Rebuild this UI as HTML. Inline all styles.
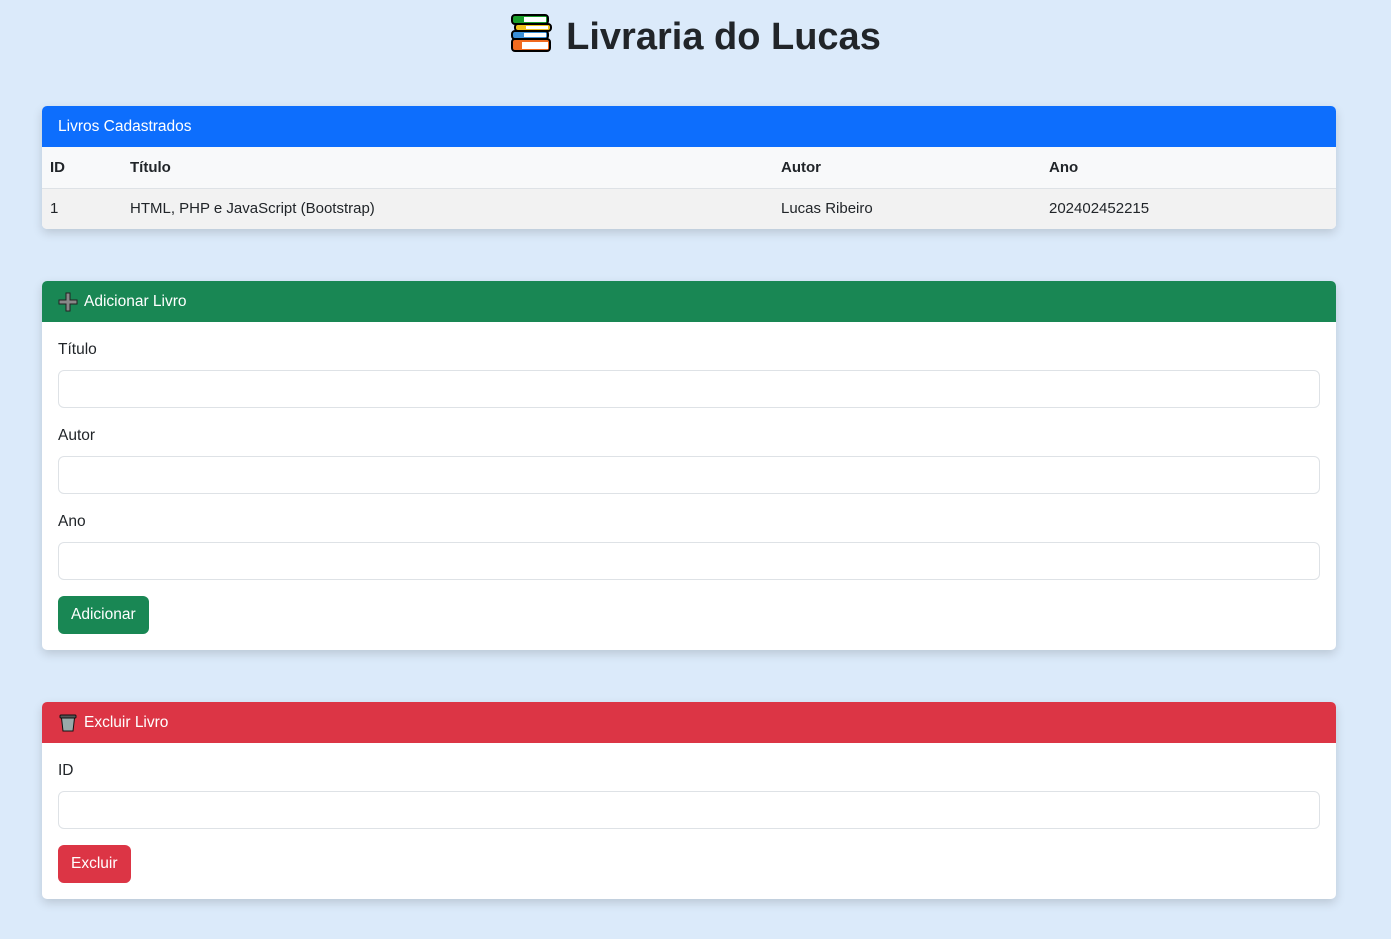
<!DOCTYPE html>
<html><head><meta charset="utf-8"><style>
*{box-sizing:border-box;margin:0;padding:0}
body{background:#dbeafa;font-family:"Liberation Sans",sans-serif;color:#212529;font-size:15px;width:1391px;height:939px;overflow:hidden}
h1{position:absolute;top:13px;left:0;width:1391px;text-align:center;font-size:38px;font-weight:bold;line-height:44px;color:#212529}
.card{position:absolute;left:42px;width:1294px;background:#fff;border-radius:5px;box-shadow:0 4px 10px rgba(0,0,0,.15);overflow:hidden}
.hd{height:41px;line-height:41px;padding-left:16px;color:#fff;font-size:15.5px;display:flex;align-items:center;gap:6px}
table{width:100%;border-collapse:collapse}
td,th{text-align:left;height:41px;padding-left:8px;font-size:15px}
th{background:#f8f9fa;font-weight:bold;border-bottom:1px solid #dee2e6}
tr.r td{background:#f2f2f2}
.body{padding:16px}
label{display:block;font-size:15.5px;height:24px;line-height:24px;margin-bottom:8px}
.in{height:38px;border:1px solid #dee2e6;border-radius:6px;margin-bottom:16px}
.btn{display:inline-block;height:38px;line-height:38px;padding:0 13px;color:#fff;border-radius:6px;font-size:15.5px}
</style></head><body>
<h1><svg width="42" height="40" viewBox="0 0 42 40" style="vertical-align:-4px;margin-right:14px"><rect x="2" y="2" width="36" height="9" rx="3" fill="#1a9e2b" stroke="#000" stroke-width="2"/><rect x="14" y="4" width="22" height="5" fill="#fff"/><rect x="5" y="11" width="36" height="7" rx="3" fill="#f2c31b" stroke="#000" stroke-width="2"/><rect x="16" y="13" width="22" height="3" fill="#fff"/><rect x="2" y="18" width="36" height="8" rx="3" fill="#3b8fd8" stroke="#000" stroke-width="2"/><rect x="14" y="20" width="22" height="4" fill="#fff"/><rect x="2" y="26" width="38" height="12" rx="3" fill="#f06a1f" stroke="#000" stroke-width="2"/><rect x="12" y="29" width="26" height="7" fill="#fff"/></svg>Livraria do Lucas</h1>

<div class="card" style="top:106px">
<div class="hd" style="background:#0d6efd">Livros Cadastrados</div>
<table><tr><th style="width:80px">ID</th><th style="width:651px">Título</th><th style="width:268px">Autor</th><th>Ano</th></tr>
<tr class="r"><td>1</td><td>HTML, PHP e JavaScript (Bootstrap)</td><td>Lucas Ribeiro</td><td>202402452215</td></tr></table>
</div>

<div class="card" style="top:281px;height:369px">
<div class="hd" style="background:#198754"><svg width="20" height="20" viewBox="0 0 20 20"><path d="M8 1h4v7h7v4h-7v7H8v-7H1V8h7z" fill="#888" stroke="#222" stroke-width="1"/></svg>Adicionar Livro</div>
<div class="body">
<label>Título</label><div class="in"></div>
<label>Autor</label><div class="in"></div>
<label>Ano</label><div class="in"></div>
<span class="btn" style="background:#198754">Adicionar</span>
</div></div>

<div class="card" style="top:702px;height:197px">
<div class="hd" style="background:#dc3545"><svg width="20" height="20" viewBox="0 0 20 20"><rect x="2" y="2" width="16" height="3" rx="1" fill="#555" stroke="#111"/><path d="M3.5 5h13l-1.5 13h-10z" fill="#9aa" stroke="#111"/></svg>Excluir Livro</div>
<div class="body">
<label>ID</label><div class="in"></div>
<span class="btn" style="background:#dc3545">Excluir</span>
</div></div>
</body></html>
